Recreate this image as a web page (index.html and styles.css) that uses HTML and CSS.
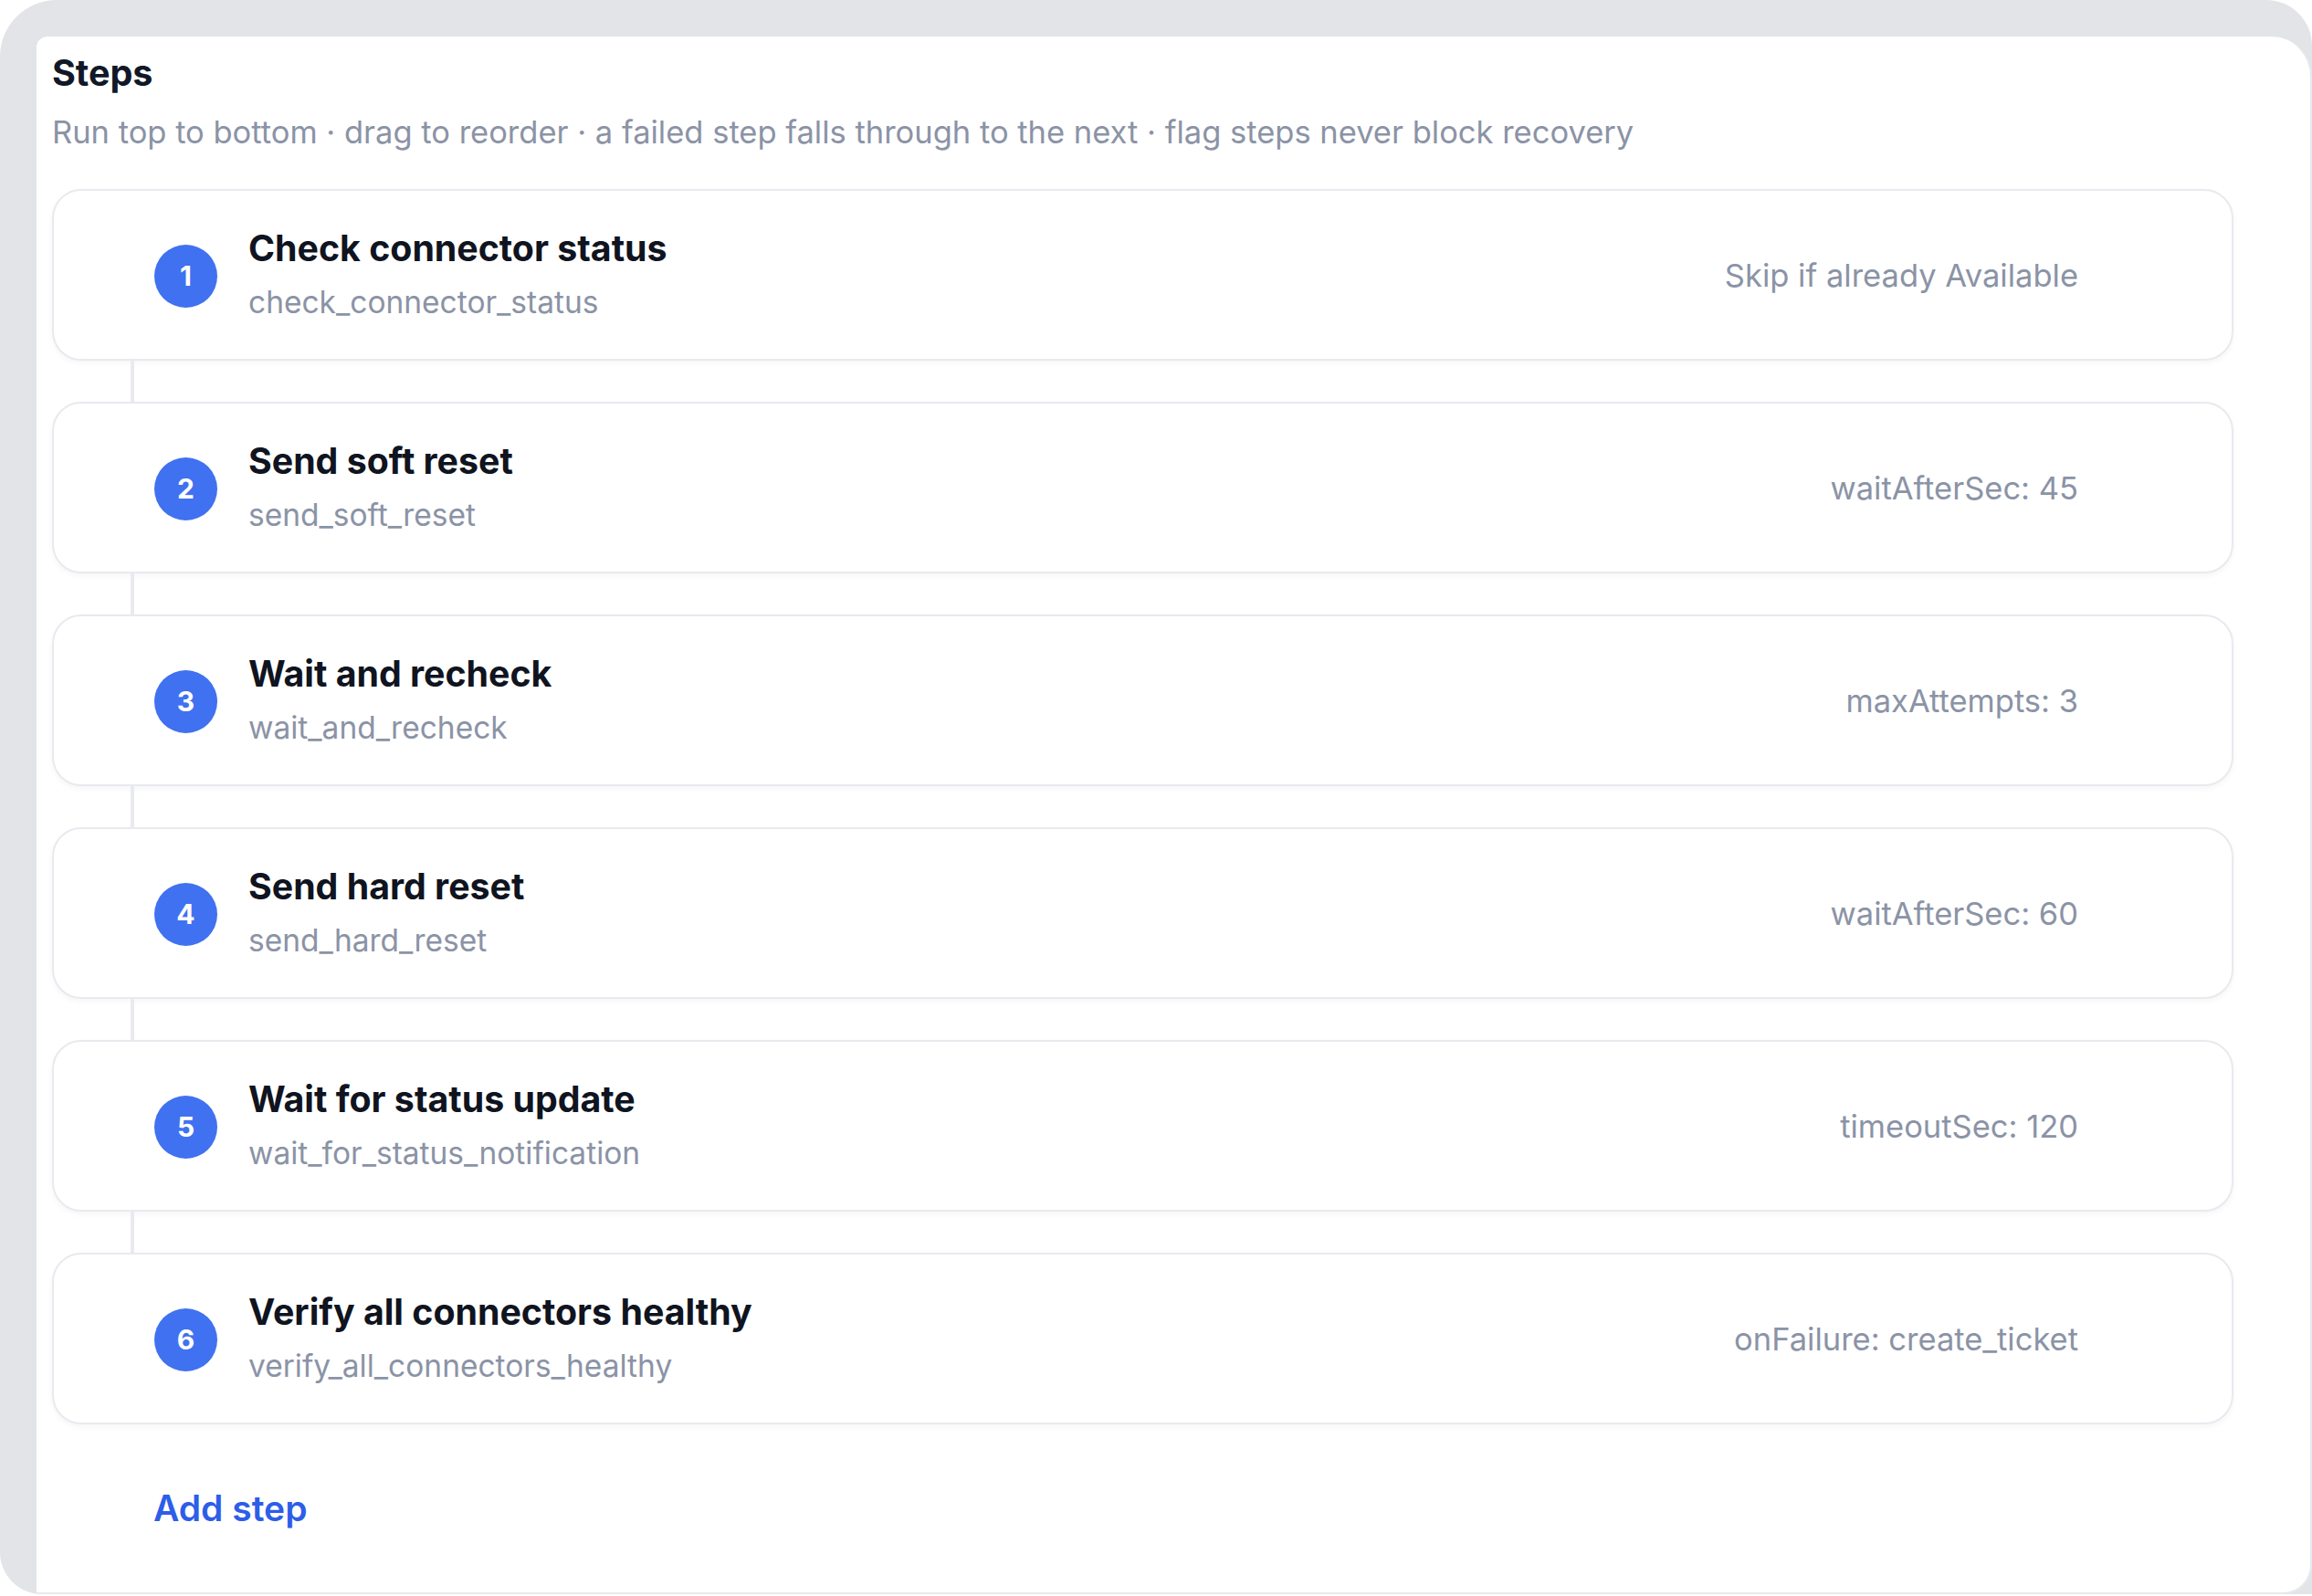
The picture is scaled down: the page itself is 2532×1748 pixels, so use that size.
FILE: index.html
```html
<!DOCTYPE html>
<html lang="en">
<head>
<meta charset="utf-8">
<title>Steps</title>
<link rel="stylesheet" href="styles.css">
</head>
<body>
<div class="frame">
  <section class="panel">
    <h2 class="panel-title">Steps</h2>
    <p class="panel-sub">Run top to bottom · drag to reorder · a failed step falls through to the next · flag steps never block recovery</p>

    <div class="steps">
      <div class="step">
        <span class="badge">1</span>
        <div class="step-text">
          <div class="step-name">Check connector status</div>
          <div class="step-code">check_connector_status</div>
        </div>
        <div class="step-meta">Skip if already Available</div>
      </div>
      <div class="connector"></div>
      <div class="step">
        <span class="badge">2</span>
        <div class="step-text">
          <div class="step-name">Send soft reset</div>
          <div class="step-code">send_soft_reset</div>
        </div>
        <div class="step-meta">waitAfterSec: 45</div>
      </div>
      <div class="connector"></div>
      <div class="step">
        <span class="badge">3</span>
        <div class="step-text">
          <div class="step-name">Wait and recheck</div>
          <div class="step-code">wait_and_recheck</div>
        </div>
        <div class="step-meta">maxAttempts: 3</div>
      </div>
      <div class="connector"></div>
      <div class="step">
        <span class="badge">4</span>
        <div class="step-text">
          <div class="step-name">Send hard reset</div>
          <div class="step-code">send_hard_reset</div>
        </div>
        <div class="step-meta">waitAfterSec: 60</div>
      </div>
      <div class="connector"></div>
      <div class="step">
        <span class="badge">5</span>
        <div class="step-text">
          <div class="step-name">Wait for status update</div>
          <div class="step-code">wait_for_status_notification</div>
        </div>
        <div class="step-meta">timeoutSec: 120</div>
      </div>
      <div class="connector"></div>
      <div class="step">
        <span class="badge">6</span>
        <div class="step-text">
          <div class="step-name">Verify all connectors healthy</div>
          <div class="step-code">verify_all_connectors_healthy</div>
        </div>
        <div class="step-meta">onFailure: create_ticket</div>
      </div>
    </div>

    <button class="add-step" type="button">Add step</button>
  </section>
</div>
</body>
</html>
```

FILE: styles.css
```css
* { box-sizing: border-box; }

html, body {
  margin: 0;
  padding: 0;
  background: #ffffff;
}

body {
  font-family: "Inter", "Liberation Sans", sans-serif;
  width: 2532px;
  height: 1748px;
  overflow: hidden;
}

.frame {
  width: 2532px;
  height: 1746px;
  background: #e2e4e8;
  border-radius: 62px 50px 0 46px;
  padding: 40px 0 0 40px;
  overflow: hidden;
}

.panel {
  height: 100%;
  background: #ffffff;
  border-right: 2px solid #e7e9ee;
  border-bottom: 2px solid #e7e9ee;
  border-radius: 12px 44px 32px 0;
  padding: 16px 80px 0 17px;
  display: flex;
  flex-direction: column;
  align-items: flex-start;
}

.panel-title {
  margin: 0;
  font-size: 39.5px;
  font-weight: 700;
  color: #111827;
  line-height: normal;
}

.panel-sub {
  margin: 20px 0 0;
  font-size: 34.5px;
  font-weight: 400;
  color: #8b93a6;
  line-height: normal;
}

.steps {
  margin-top: 42px;
  width: 2389px;
  display: flex;
  flex-direction: column;
}

.step {
  height: 188px;
  display: flex;
  align-items: center;
  background: #ffffff;
  border: 2px solid #e8eaef;
  border-radius: 32px;
  box-shadow: 0 3px 6px rgba(17, 24, 39, 0.04);
  padding: 0 168px 6px 110px;
}

.badge {
  flex: none;
  width: 69px;
  height: 69px;
  margin-top: 8px;
  border-radius: 50%;
  background: #4071f0;
  color: #ffffff;
  font-size: 30px;
  font-weight: 700;
  display: flex;
  align-items: center;
  justify-content: center;
}

.step-text {
  margin-left: 34px;
  margin-top: 3px;
  flex: 1;
  display: flex;
  flex-direction: column;
  gap: 16px;
}

.step-name {
  font-size: 39.3px;
  font-weight: 700;
  color: #0f1420;
  line-height: normal;
}

.step-code {
  font-size: 33.5px;
  color: #8b93a6;
  line-height: normal;
}

.step-meta {
  margin-top: 6px;
  font-size: 34.5px;
  color: #8b93a6;
  line-height: normal;
  white-space: nowrap;
}

.connector {
  width: 4px;
  height: 49px;
  margin: -2px 0 -2px 86px;
  background: #e8eaef;
}

.add-step {
  margin: 68px 0 0 111px;
  padding: 0;
  border: 0;
  background: none;
  font-family: inherit;
  font-size: 39px;
  font-weight: 600;
  color: #2d5ee8;
  line-height: normal;
  cursor: pointer;
}
```
